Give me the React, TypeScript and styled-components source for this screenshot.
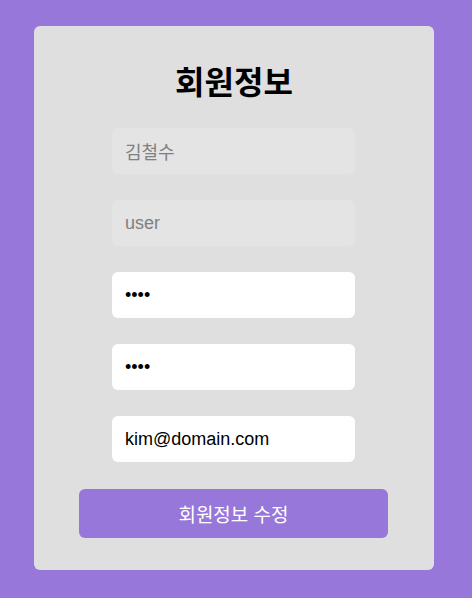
import styled, { createGlobalStyle } from 'styled-components';

const GlobalStyle = createGlobalStyle`
  html, body {
    margin: 0;
    padding: 0;
    background: #9877db;
    font-family: "Liberation Sans", "Noto Sans CJK KR", sans-serif;
  }
`;

const fields = [
  { type: 'text', value: '김철수', disabled: true },
  { type: 'text', value: 'user', disabled: true },
  { type: 'password', value: '1234', disabled: false },
  { type: 'password', value: '1234', disabled: false },
  { type: 'email', value: 'kim@domain.com', disabled: false },
];

const App = () => {
  return (
    <Page>
      <GlobalStyle />
      <Card>
        <Title>회원정보</Title>
        <Form onSubmit={(e) => e.preventDefault()}>
          {fields.map((f, i) => (
            <Input
              key={i}
              type={f.type}
              defaultValue={f.value}
              disabled={f.disabled}
              $locked={f.disabled}
            />
          ))}
          <Submit type="submit">회원정보 수정</Submit>
        </Form>
      </Card>
    </Page>
  );
};

const Page = styled.div`
  display: flex;
  justify-content: flex-start;
  padding: 26px 38px 28px 34px;
  min-height: 598px;
  box-sizing: border-box;
`;

const Card = styled.div`
  display: flex;
  flex-direction: column;
  align-items: center;
  width: 400px;
  height: 544px;
  box-sizing: border-box;
  padding: 34px 0 32px;
  background: #dfdfdf;
  border-radius: 6px;
`;

const Title = styled.h1`
  margin: 0 0 22px;
  font-size: 32px;
  font-weight: 700;
  line-height: 46px;
  color: #000;
`;

const Form = styled.form`
  display: flex;
  flex-direction: column;
  align-items: center;
  padding-right: 1px;
`;

const Input = styled.input<{ $locked: boolean }>`
  width: 243px;
  height: 46px;
  box-sizing: border-box;
  margin-bottom: 26px;
  padding: 0 13px;
  border: none;
  border-radius: 6px;
  outline: none;
  font-family: "Liberation Sans", "Noto Sans CJK KR", sans-serif;
  font-size: 18px;
  background: ${(p) => (p.$locked ? '#e4e4e4' : '#ffffff')};
  color: ${(p) => (p.$locked ? '#808080' : '#000000')};
  -webkit-text-fill-color: ${(p) => (p.$locked ? '#808080' : '#000000')};
  opacity: 1;
`;

const Submit = styled.button`
  width: 309px;
  height: 49px;
  margin-top: 1px;
  border: none;
  border-radius: 6px;
  background: #9877db;
  color: #ffffff;
  font-family: "Liberation Sans", "Noto Sans CJK KR", sans-serif;
  font-size: 19px;
  cursor: pointer;
`;

export default App;
